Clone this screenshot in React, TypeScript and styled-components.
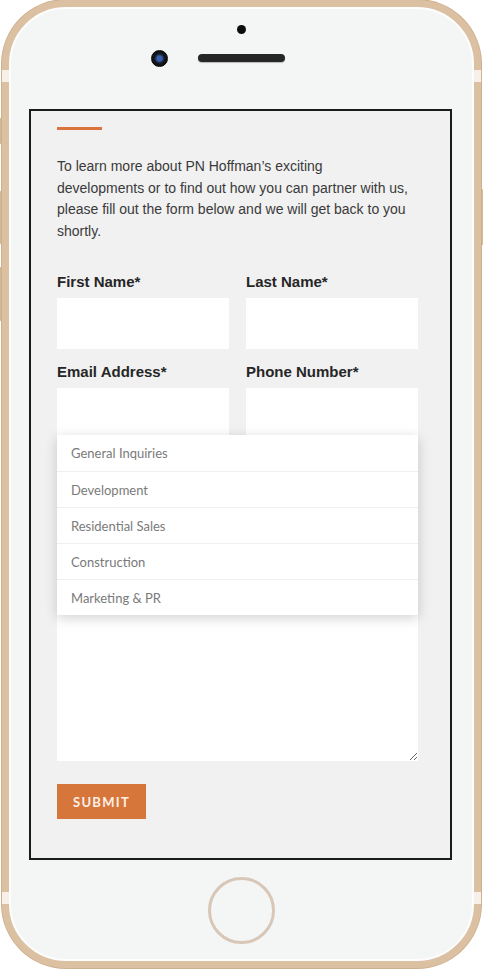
import React from "react";
import styled, { createGlobalStyle } from "styled-components";

const Global = createGlobalStyle`
  html, body { margin: 0; padding: 0; background: #ffffff; }
  * { box-sizing: border-box; }
`;

const Stage = styled.div`
  position: relative;
  width: 483px;
  height: 970px;
  overflow: hidden;
`;

const SideKey = styled.div<{ $side: "left" | "right"; $top: number; $h: number }>`
  position: absolute;
  top: ${(p) => p.$top}px;
  ${(p) => (p.$side === "left" ? "left: 0;" : "left: 479px;")}
  width: 4px;
  height: ${(p) => p.$h}px;
  border-radius: 2px;
  background: linear-gradient(90deg, #cfb293, #f3e8db 50%, #cfb293);
  border: 1px solid #d3b896;
`;

const Phone = styled.div`
  position: relative;
  margin-left: 2px;
  width: 479px;
  height: 968px;
  border: 7px solid #dbc1a2;
  border-radius: 64px;
  background: #f4f6f6;
  box-shadow: inset 0 0 0 2px #fdfdfd, 0 0 0 1px #cdb08f;
  display: flex;
  flex-direction: column;
  align-items: center;
`;

const Band = styled.div<{ $side: "left" | "right"; $top: number }>`
  position: absolute;
  top: ${(p) => p.$top}px;
  ${(p) => (p.$side === "left" ? "left: -7px;" : "right: -7px;")}
  width: 7px;
  height: 12px;
  background: #f6f0e8;
`;

const Sensor = styled.div`
  margin-top: 17.5px;
  width: 9px;
  height: 9px;
  border-radius: 50%;
  background: #0c0c0c;
`;

const CameraRow = styled.div`
  margin-top: 16px;
  width: 100%;
  display: grid;
  grid-template-columns: 1fr auto 1fr;
  align-items: center;
`;

const Camera = styled.div`
  justify-self: end;
  margin-right: 30px;
  width: 17px;
  height: 17px;
  border-radius: 50%;
  background: radial-gradient(circle at 50% 50%, #3a5fa8 0 2.5px, #1c2f57 4px, #141414 5.5px);
  border: 1px solid #050505;
`;

const Speaker = styled.div`
  width: 87px;
  height: 7.5px;
  border-radius: 4px;
  background: #262626;
  box-shadow: 0 1px 1px rgba(0, 0, 0, 0.25);
`;

const Screen = styled.div`
  align-self: flex-start;
  margin-left: 20px;
  margin-top: 42.5px;
  width: 423px;
  height: 751px;
  border: 2px solid #1b1b1b;
  background: #f1f1f1;
  padding: 16px 32px 0 26px;
  display: flex;
  flex-direction: column;
`;

const Accent = styled.div`
  width: 45px;
  height: 3px;
  background: #d9743f;
`;

const Intro = styled.p`
  margin: 26px 0 0;
  font-family: "Liberation Sans", Arial, sans-serif;
  font-size: 14px;
  line-height: 21.7px;
  color: #3a3a3a;
`;

const FormGrid = styled.div`
  margin-top: 30.5px;
  display: grid;
  grid-template-columns: 172px 172px;
  column-gap: 17px;
  row-gap: 14px;
`;

const Field = styled.div<{ $wide?: boolean }>`
  position: relative;
  display: flex;
  flex-direction: column;
  ${(p) => (p.$wide ? "grid-column: 1 / -1;" : "")}
`;

const Label = styled.label`
  font-family: "Liberation Sans", Arial, sans-serif;
  font-weight: 700;
  font-size: 15px;
  line-height: 18px;
  color: #262626;
  margin-bottom: 7px;
`;

const Input = styled.input`
  display: block;
  width: 100%;
  height: 51px;
  border: 0;
  background: #ffffff;
  outline: none;
`;

const Message = styled.textarea`
  display: block;
  width: 100%;
  height: 308px;
  border: 0;
  padding: 0;
  background: #ffffff;
  resize: vertical;
  outline: none;
`;

const Menu = styled.ul`
  position: absolute;
  top: -18.3px;
  left: 0;
  right: 0;
  margin: 0;
  padding: 0;
  list-style: none;
  background: #ffffff;
  box-shadow: 0 3px 12px rgba(0, 0, 0, 0.18);
  z-index: 2;
`;

const MenuItem = styled.li`
  height: 36px;
  display: flex;
  align-items: center;
  padding-left: 14px;
  font-family: Lato, "Open Sans", sans-serif;
  font-size: 13px;
  color: #7a7a7a;
  & + & {
    border-top: 1px solid #efefef;
  }
`;

const Submit = styled.button`
  margin-top: 23px;
  align-self: flex-start;
  width: 89px;
  height: 35px;
  border: 0;
  background: #d6763b;
  color: #fcefe6;
  font-family: Lato, "Open Sans", sans-serif;
  font-weight: 700;
  font-size: 13px;
  letter-spacing: 1.3px;
  padding: 0;
`;

const HomeButton = styled.div`
  margin-top: 16.5px;
  width: 67px;
  height: 67px;
  border-radius: 50%;
  border: 3px solid #d8c7b6;
`;

const options = [
  "General Inquiries",
  "Development",
  "Residential Sales",
  "Construction",
  "Marketing & PR",
];

export default function App() {
  return (
    <Stage>
      <Global />
      <SideKey $side="left" $top={117} $h={28} />
      <SideKey $side="left" $top={190} $h={55} />
      <SideKey $side="left" $top={266} $h={56} />
      <SideKey $side="right" $top={188} $h={58} />
      <Phone>
        <Band $side="left" $top={63} />
        <Band $side="right" $top={63} />
        <Band $side="left" $top={885} />
        <Band $side="right" $top={885} />
        <Sensor />
        <CameraRow>
          <Camera />
          <Speaker />
          <div />
        </CameraRow>
        <Screen>
          <Accent />
          <Intro>
            To learn more about PN Hoffman’s exciting
            <br />
            developments or to find out how you can partner with us,
            <br />
            please fill out the form below and we will get back to you
            <br />
            shortly.
          </Intro>
          <FormGrid>
            <Field>
              <Label>First Name*</Label>
              <Input />
            </Field>
            <Field>
              <Label>Last Name*</Label>
              <Input />
            </Field>
            <Field>
              <Label>Email Address*</Label>
              <Input />
            </Field>
            <Field>
              <Label>Phone Number*</Label>
              <Input />
            </Field>
            <Field $wide>
              <Message />
              <Menu>
                {options.map((o) => (
                  <MenuItem key={o}>{o}</MenuItem>
                ))}
              </Menu>
            </Field>
          </FormGrid>
          <Submit>SUBMIT</Submit>
        </Screen>
        <HomeButton />
      </Phone>
    </Stage>
  );
}
